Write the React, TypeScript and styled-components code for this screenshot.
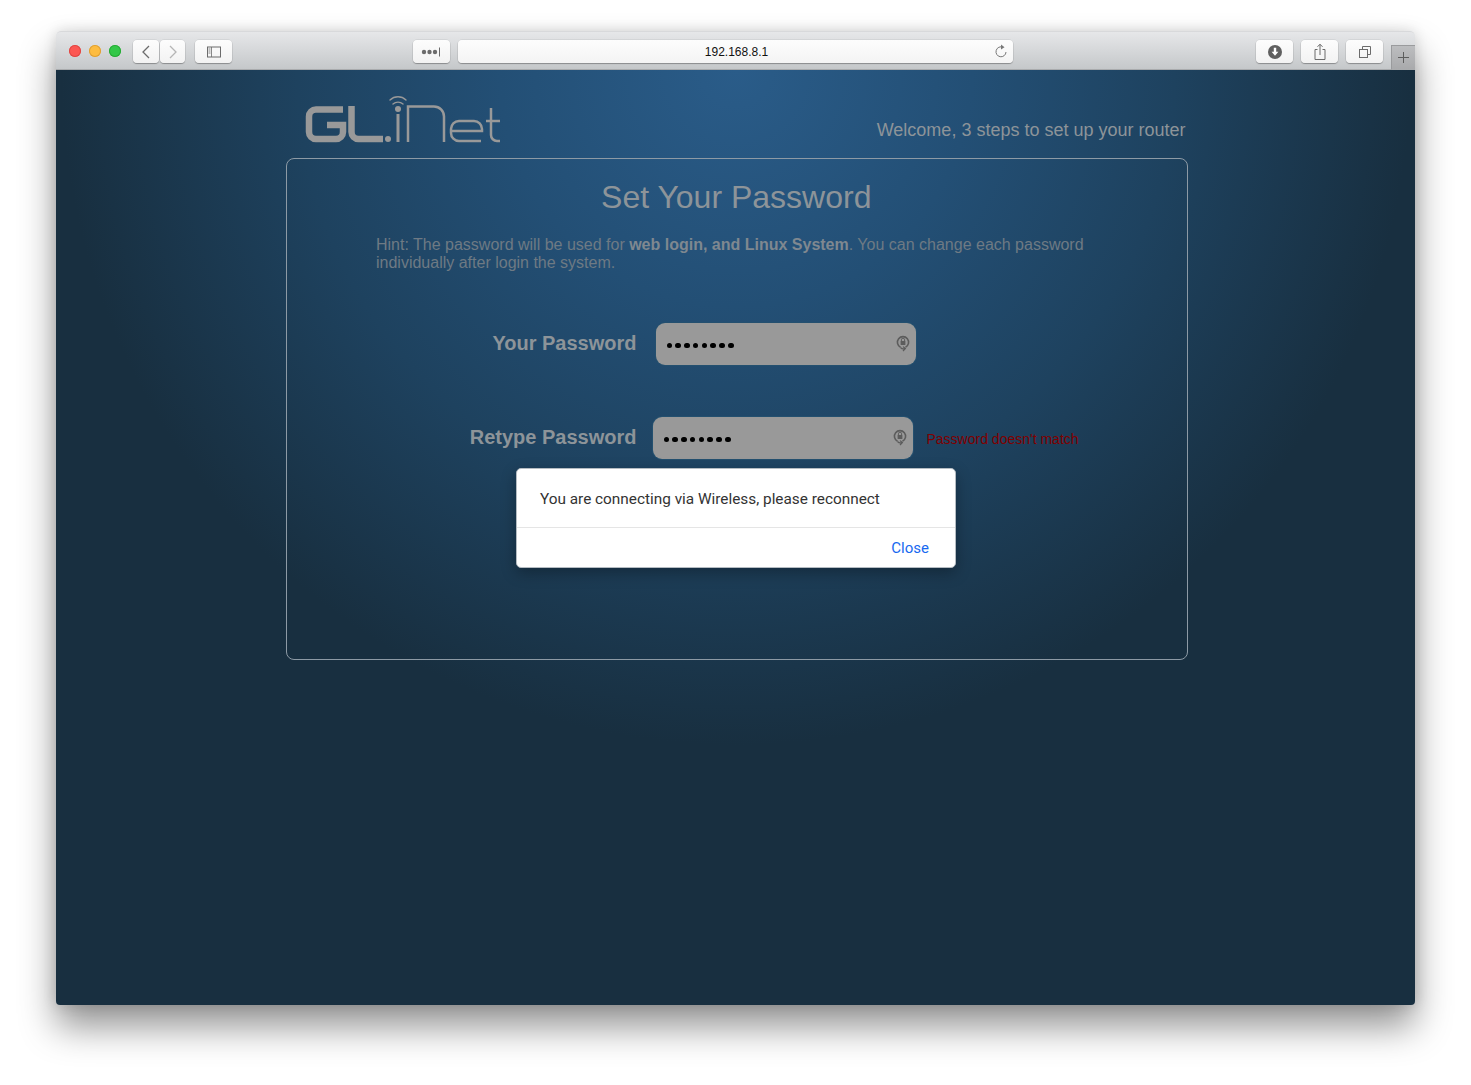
import React from "react";
import styled, { createGlobalStyle } from "styled-components";

const GlobalStyle = createGlobalStyle`
  html, body {
    margin: 0;
    padding: 0;
    background: #ffffff;
    font-family: "Liberation Sans", Arial, sans-serif;
  }
`;

const Page = styled.div`
  width: 1471px;
  height: 1085px;
  padding: 31px 56px 0 56px;
  box-sizing: border-box;
  overflow: hidden;
`;

const Window = styled.div`
  position: relative;
  width: 1359px;
  height: 974px;
  border-radius: 5px;
  display: flex;
  flex-direction: column;
  box-shadow: 0 22px 36px rgba(0, 0, 0, 0.42), 0 0 14px rgba(0, 0, 0, 0.14);
`;

const Toolbar = styled.div`
  position: relative;
  height: 39px;
  flex: none;
  box-sizing: border-box;
  display: flex;
  align-items: flex-start;
  padding: 8px 8px 0 13px;
  border-radius: 5px 5px 0 0;
  background: linear-gradient(#e6e7e9, #c5c8ca);
  border-top: 1px solid #d8d9db;
  border-bottom: 1px solid #a9abad;
`;

const Lights = styled.div`
  display: flex;
  gap: 8px;
  margin-top: 5px;
  width: 64px;
`;

const Light = styled.span<{ $color: string; $edge: string }>`
  width: 12px;
  height: 12px;
  border-radius: 50%;
  background: ${(p) => p.$color};
  box-shadow: inset 0 0 0 1px ${(p) => p.$edge};
`;

const ToolButton = styled.div<{ $width: number; $gap?: number }>`
  width: ${(p) => p.$width}px;
  height: 23px;
  margin-left: ${(p) => p.$gap ?? 0}px;
  flex: none;
  box-sizing: border-box;
  display: flex;
  align-items: center;
  justify-content: center;
  background: linear-gradient(#fdfdfd, #f2f2f2);
  border-radius: 4px;
  box-shadow: 0 1px 1px rgba(0, 0, 0, 0.28), 0 0 0 0.5px rgba(0, 0, 0, 0.1);
`;

const AddressBar = styled.div`
  position: relative;
  width: 555px;
  height: 23px;
  margin-left: 8px;
  padding-left: 2px;
  box-sizing: border-box;
  flex: none;
  display: flex;
  align-items: center;
  justify-content: center;
  background: linear-gradient(#fdfdfd, #f4f4f4);
  border-radius: 4px;
  box-shadow: 0 1px 1px rgba(0, 0, 0, 0.28), 0 0 0 0.5px rgba(0, 0, 0, 0.1);
  font-size: 12px;
  color: #111;
`;

const Reload = styled.svg`
  position: absolute;
  right: 5px;
  top: 4px;
`;

const NewTab = styled.div`
  position: absolute;
  right: 0;
  bottom: -1px;
  width: 24px;
  height: 25px;
  box-sizing: border-box;
  display: flex;
  align-items: center;
  justify-content: center;
  background: linear-gradient(#bcbdbf, #a9aaac);
  border-top: 1px solid #9a9b9d;
  border-left: 1px solid #9a9b9d;
  border-bottom: 1px solid #a9abad;
`;

const Content = styled.div`
  position: relative;
  flex: 1;
  border-radius: 0 0 4px 4px;
  background: radial-gradient(circle 675px at 680px 0, #2a5c89 0%, #234f75 35%, #1e425f 65%, #182f40 100%);
  background-color: #182f40;
  display: flex;
  flex-direction: column;
  align-items: center;
`;

const Column = styled.div`
  width: 902px;
  margin-left: 2px;
`;

const Header = styled.div`
  height: 88px;
  display: flex;
  align-items: flex-start;
  justify-content: space-between;
  padding: 24px 2px 0 19px;
  box-sizing: border-box;
`;

const Welcome = styled.div`
  margin-top: 25px;
  font-size: 18px;
  line-height: 22px;
  color: #8d9499;
`;

const Card = styled.div`
  height: 502px;
  box-sizing: border-box;
  border: 1px solid #8d9aa5;
  border-radius: 8px;
  padding: 20px 90px 0 89.5px;
`;

const Title = styled.h1`
  margin: 0;
  text-align: center;
  font-size: 32px;
  line-height: 36px;
  font-weight: 400;
  color: #8d9499;
`;

const Hint = styled.p`
  margin: 21px 0 0 0;
  font-size: 16px;
  line-height: 18px;
  color: #6e7a84;
  b {
    font-weight: 700;
    color: #7f8890;
  }
`;

const FieldRow = styled.div<{ $top: number; $inputLeft: number }>`
  display: flex;
  align-items: center;
  margin-top: ${(p) => p.$top}px;
  height: 42px;
  padding-left: ${(p) => p.$inputLeft}px;
`;

const FieldLabel = styled.label<{ $gap: number }>`
  width: 260px;
  margin-left: -260px;
  flex: none;
  padding: 0 ${(p) => p.$gap}px 2px 0;
  box-sizing: border-box;
  text-align: right;
  font-size: 20px;
  font-weight: 700;
  color: #8d9499;
`;

const Input = styled.div`
  position: relative;
  width: 260px;
  height: 42px;
  flex: none;
  box-sizing: border-box;
  padding: 3px 0 0 11px;
  display: flex;
  align-items: center;
  gap: 3.3px;
  background: #999999;
  border-radius: 9px;
  box-shadow: 0 0 0 1px #24506f;
`;

const Dot = styled.span`
  width: 5.5px;
  height: 5.5px;
  flex: none;
  border-radius: 50%;
  background: #000;
`;

const KeyIcon = styled.svg`
  position: absolute;
  right: 5px;
  top: 11px;
`;

const FieldError = styled.span`
  margin: 2px 0 0 14px;
  white-space: nowrap;
  font-size: 14px;
  color: #800000;
`;

const Dialog = styled.div`
  position: absolute;
  left: 460px;
  top: 398px;
  width: 440px;
  height: 100px;
  box-sizing: border-box;
  background: #ffffff;
  border: 1px solid #b5bcc2;
  border-radius: 5px;
  box-shadow: 0 5px 15px rgba(0, 0, 0, 0.3);
  font-family: Roboto, "Liberation Sans", sans-serif;
  display: flex;
  flex-direction: column;
`;

const DialogMessage = styled.div`
  height: 59px;
  box-sizing: border-box;
  padding: 21px 23px 0 23px;
  border-bottom: 1px solid #e5e5e5;
  font-size: 15.35px;
  line-height: 19px;
  color: #333333;
`;

const DialogFooter = styled.div`
  flex: 1;
  display: flex;
  align-items: center;
  justify-content: flex-end;
  padding-right: 26px;
`;

const CloseLink = styled.a`
  font-size: 15px;
  color: #1769f0;
`;

const Logo = () => (
  <svg width="197" height="52" viewBox="0 0 197 52" fill="none" stroke="#999999">
    {/* wifi arcs */}
    <path d="M85 6a11.5 11.5 0 0 1 16 0" strokeWidth="1.4" strokeLinecap="round" />
    <path d="M88 10a7.5 7.5 0 0 1 10 0" strokeWidth="1.4" strokeLinecap="round" />
    <circle cx="93" cy="15" r="3" fill="#999999" stroke="none" />
    {/* G */}
    <path d="M38 15.5H11a7 7 0 0 0-7 7V38a7 7 0 0 0 7 7h20a7 7 0 0 0 7-7v-7H22" strokeWidth="6.5" />
    {/* L */}
    <path d="M46.5 12v26a7 7 0 0 0 7 7H78" strokeWidth="6.5" />
    {/* dot */}
    <circle cx="83" cy="45" r="3" fill="#999999" stroke="none" />
    {/* i */}
    <path d="M93 20v28" strokeWidth="3" />
    {/* n */}
    <path d="M103 48V12.5h26a10 10 0 0 1 10 10V48" strokeWidth="2.5" />
    {/* e */}
    <path d="M146 37h31v-2a8 8 0 0 0-8-8h-15a8 8 0 0 0-8 8v4a8 8 0 0 0 8 8h22" strokeWidth="2.5" />
    {/* t */}
    <path d="M186 14v27a6 6 0 0 0 6 6h3M181 27h14" strokeWidth="2.5" />
  </svg>
);

const PasswordKey = () => (
  <KeyIcon width="16" height="18" viewBox="0 0 16 18" fill="none">
    <path d="M5.5 13.2A5.6 5.6 0 1 1 10.5 13.2" stroke="#5c5c5c" strokeWidth="1.6" />
    <rect x="5.6" y="7" width="4.8" height="4" rx="0.6" fill="#5c5c5c" />
    <path d="M6.4 7V5.8a1.6 1.6 0 0 1 3.2 0V7" stroke="#5c5c5c" strokeWidth="1" />
    <path d="M5.5 13.5a4 4 0 0 0 4.5 1M8 17l2.4-2.4L8 12.6" stroke="#5c5c5c" strokeWidth="1.2" />
  </KeyIcon>
);

const dots = Array.from({ length: 8 }, (_, i) => i);

const PasswordField = () => (
  <Input>
    {dots.map((d) => (
      <Dot key={d} />
    ))}
    <PasswordKey />
  </Input>
);

export default function App() {
  return (
    <Page>
      <GlobalStyle />
      <Window>
        <Toolbar>
          <Lights>
            <Light $color="#fc5753" $edge="#df4744" />
            <Light $color="#fdbc40" $edge="#de9f34" />
            <Light $color="#33c748" $edge="#27aa35" />
          </Lights>
          <ToolButton $width={26}>
            <svg width="10" height="14" viewBox="0 0 10 14" fill="none" stroke="#6b6b6b" strokeWidth="1.3">
              <path d="M8 1 2 7l6 6" />
            </svg>
          </ToolButton>
          <ToolButton $width={25} $gap={1}>
            <svg width="10" height="14" viewBox="0 0 10 14" fill="none" stroke="#b5b5b5" strokeWidth="1.3">
              <path d="M2 1l6 6-6 6" />
            </svg>
          </ToolButton>
          <ToolButton $width={37} $gap={10}>
            <svg width="16" height="12" viewBox="0 0 16 12" fill="none" stroke="#6b6b6b">
              <rect x="1.5" y="1" width="13" height="10" />
              <path d="M5.5 1V11M2.5 3h2M2.5 5h2M2.5 7h2" strokeWidth="0.8" />
            </svg>
          </ToolButton>
          <ToolButton $width={37} $gap={181}>
            <svg width="22" height="10" viewBox="0 0 22 10" fill="#6b6b6b">
              <circle cx="3" cy="5" r="2.2" />
              <circle cx="8.5" cy="5" r="2.2" />
              <circle cx="14" cy="5" r="2.2" />
              <rect x="18" y="0.5" width="1" height="9" />
            </svg>
          </ToolButton>
          <AddressBar>
            192.168.8.1
            <Reload width="14" height="15" viewBox="0 0 14 15" fill="none" stroke="#777" strokeWidth="1">
              <path d="M9 3.2A5 5 0 1 0 12 8" />
              <path d="M7 0.5 10.5 3.2 7 5.5Z" fill="#777" stroke="none" />
            </Reload>
          </AddressBar>
          <ToolButton $width={37} $gap={243}>
            <svg width="16" height="16" viewBox="0 0 16 16">
              <circle cx="8" cy="8" r="7" fill="#5f5f5f" />
              <path d="M6.8 3.8h2.4v4H11.4L8 11.8 4.6 7.8H6.8Z" fill="#fff" />
            </svg>
          </ToolButton>
          <ToolButton $width={37} $gap={8}>
            <svg width="14" height="18" viewBox="0 0 14 18" fill="none" stroke="#6b6b6b">
              <path d="M4.5 6.5H2v10h10v-10H9.5" />
              <path d="M7 12V1.5M4.5 3.8 7 1.2l2.5 2.6" />
            </svg>
          </ToolButton>
          <ToolButton $width={37} $gap={8}>
            <svg width="14" height="14" viewBox="0 0 14 14" fill="none" stroke="#6b6b6b">
              <rect x="1.5" y="4.5" width="8" height="8" />
              <path d="M4.5 4.5v-3h8v8h-3" />
            </svg>
          </ToolButton>
          <NewTab>
            <svg width="13" height="13" viewBox="0 0 13 13" stroke="#5d5d5d">
              <path d="M6.5 1v11M1 6.5h11" />
            </svg>
          </NewTab>
        </Toolbar>
        <Content>
          <Column>
            <Header>
              <Logo />
              <Welcome>Welcome, 3 steps to set up your router</Welcome>
            </Header>
            <Card>
              <Title>Set Your Password</Title>
              <Hint>
                Hint: The password will be used for <b>web login, and Linux System</b>. You can change each
                password individually after login the system.
              </Hint>
              <FieldRow $top={51} $inputLeft={279.5}>
                <FieldLabel $gap={19}>Your Password</FieldLabel>
                <PasswordField />
              </FieldRow>
              <FieldRow $top={52} $inputLeft={276.5}>
                <FieldLabel $gap={16}>Retype Password</FieldLabel>
                <PasswordField />
                <FieldError>Password doesn't match</FieldError>
              </FieldRow>
            </Card>
          </Column>
          <Dialog>
            <DialogMessage>You are connecting via Wireless, please reconnect</DialogMessage>
            <DialogFooter>
              <CloseLink>Close</CloseLink>
            </DialogFooter>
          </Dialog>
        </Content>
      </Window>
    </Page>
  );
}
